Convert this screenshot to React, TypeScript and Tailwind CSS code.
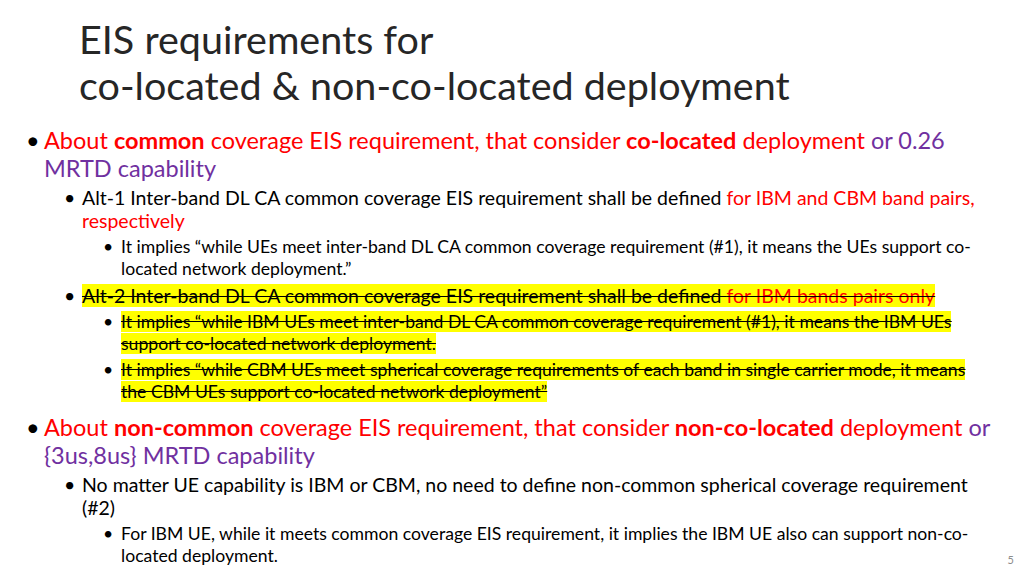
const R = 'text-[#ff0000]';
const P = 'text-[#7030a0]';

function Bullet({ level, children, dot = '•' }: { level: 1 | 2 | 3; children: React.ReactNode; dot?: string }) {
  const cfg = {
    1: 'pl-[24px] text-[23.5px] leading-[28px] mt-[6px]',
    2: 'pl-[62px] text-[19.5px] leading-[23px] mt-[4px]',
    3: 'pl-[101px] text-[17.6px] leading-[22px] mt-[4px]',
  }[level];
  const dotX = { 1: 'left-[24px]', 2: 'left-[62px]', 3: 'left-[101px]' }[level];
  return (
    <div className={`relative whitespace-nowrap ${cfg}`}>
      <span className={`absolute ${dotX} -translate-x-[18px]`}>{dot}</span>
      <div>{children}</div>
    </div>
  );
}

const hl = 'bg-[#ffff00] line-through [box-decoration-break:clone]';

export default function App() {
  return (
    <div className="w-[1024px] h-[576px] bg-white relative overflow-hidden text-black" style={{ fontFamily: 'Lato, "Open Sans", sans-serif' }}>
      <div className="pl-[79px] pt-[16px] text-[39.5px] leading-[46px] text-[#262626]">
        <div>EIS requirements for</div>
        <div>co-located &amp; non-co-located deployment</div>
      </div>
      <div className="mt-[18px] pl-[20px]">
        <Bullet level={1}>
          <span className={R}>About <b>common</b> coverage EIS requirement, that consider <b>co-located</b> deployment </span>
          <span className={P}>or 0.26</span>
          <br />
          <span className={P}>MRTD capability</span>
        </Bullet>
        <Bullet level={2}>
          Alt-1 Inter-band DL CA common coverage EIS requirement shall be defined <span className={R}>for IBM and CBM band pairs,</span>
          <br />
          <span className={R}>respectively</span>
        </Bullet>
        <Bullet level={3}>
          It implies “while UEs meet inter-band DL CA common coverage requirement (#1), it means the UEs support co-
          <br />
          located network deployment.”
        </Bullet>
        <div className="line-through">
          <Bullet level={2}>
            <span className={hl}>Alt-2 Inter-band DL CA common coverage EIS requirement shall be defined <span className={R}>for IBM bands pairs only</span></span>
          </Bullet>
          <Bullet level={3}>
            <span className={hl}>It implies “while IBM UEs meet inter-band DL CA common coverage requirement (#1), it means the IBM UEs</span>
            <br />
            <span className={hl}>support co-located network deployment.</span>
          </Bullet>
          <Bullet level={3}>
            <span className={hl}>It implies “while CBM UEs meet spherical coverage requirements of each band in single carrier mode, it means</span>
            <br />
            <span className={hl}>the CBM UEs support co-located network deployment”</span>
          </Bullet>
        </div>
        <div className="mt-[10px]" />
        <Bullet level={1}>
          <span className={R}>About <b>non-common</b> coverage EIS requirement, that consider <b>non-co-located</b> deployment </span>
          <span className={P}>or</span>
          <br />
          <span className={P}>{'{3us,8us}'} MRTD capability</span>
        </Bullet>
        <Bullet level={2}>
          No matter UE capability is IBM or CBM, no need to define non-common spherical coverage requirement
          <br />
          (#2)
        </Bullet>
        <Bullet level={3}>
          For IBM UE, while it meets common coverage EIS requirement, it implies the IBM UE also can support non-co-
          <br />
          located deployment.
        </Bullet>
      </div>
      <div className="absolute right-[10px] bottom-[8px] text-[11px] text-[#8c8c8c]">5</div>
    </div>
  );
}
